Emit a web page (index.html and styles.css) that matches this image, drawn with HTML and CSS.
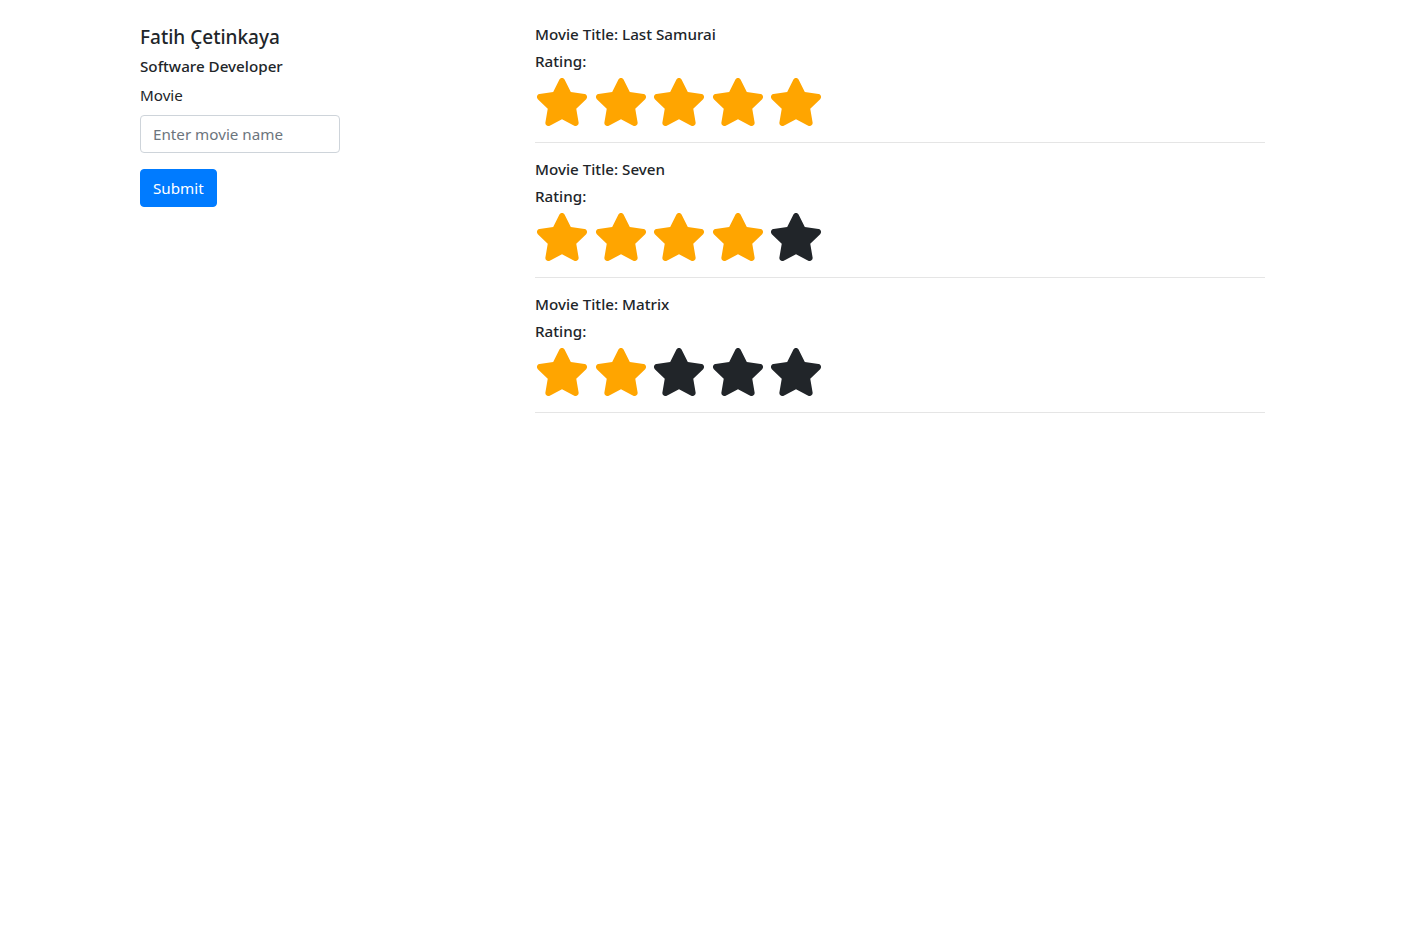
FILE: index.html
```html
<!DOCTYPE html>
<html lang="en">
<head>
<meta charset="utf-8">
<title>Movies</title>
<link rel="stylesheet" href="styles.css">
</head>
<body>
<svg width="0" height="0" class="defs" aria-hidden="true">
  <symbol id="star" viewBox="0 0 576 512">
    <path d="M259.3 17.8L194 150.2 47.9 171.5c-26.2 3.8-36.7 36.1-17.7 54.6l105.7 103-25 145.5c-4.5 26.3 23.2 46 46.4 33.7L288 439.6l130.7 68.7c23.2 12.2 50.9-7.4 46.4-33.7l-25-145.5 105.7-103c19-18.5 8.5-50.8-17.7-54.6L382 150.2 316.7 17.8c-11.7-23.6-45.6-23.9-57.4 0z"/>
  </symbol>
</svg>
<div class="container">
  <div class="col-left">
    <h5 class="name">Fatih Çetinkaya</h5>
    <h6 class="role">Software Developer</h6>
    <form class="form">
      <div class="form-group">
        <label class="label" for="movie">Movie</label>
        <input class="input" id="movie" type="text" placeholder="Enter movie name">
      </div>
      <button class="btn" type="button">Submit</button>
    </form>
  </div>
  <div class="col-right">
    <div class="movie">
      <h6 class="title">Movie Title: Last Samurai</h6>
      <h6 class="title">Rating:</h6>
      <div class="stars">
        <svg class="star on"><use href="#star"/></svg>
        <svg class="star on"><use href="#star"/></svg>
        <svg class="star on"><use href="#star"/></svg>
        <svg class="star on"><use href="#star"/></svg>
        <svg class="star on"><use href="#star"/></svg>
      </div>
    </div>
    <hr class="sep">
    <div class="movie">
      <h6 class="title">Movie Title: Seven</h6>
      <h6 class="title">Rating:</h6>
      <div class="stars">
        <svg class="star on"><use href="#star"/></svg>
        <svg class="star on"><use href="#star"/></svg>
        <svg class="star on"><use href="#star"/></svg>
        <svg class="star on"><use href="#star"/></svg>
        <svg class="star off"><use href="#star"/></svg>
      </div>
    </div>
    <hr class="sep">
    <div class="movie">
      <h6 class="title">Movie Title: Matrix</h6>
      <h6 class="title">Rating:</h6>
      <div class="stars">
        <svg class="star on"><use href="#star"/></svg>
        <svg class="star on"><use href="#star"/></svg>
        <svg class="star off"><use href="#star"/></svg>
        <svg class="star off"><use href="#star"/></svg>
        <svg class="star off"><use href="#star"/></svg>
      </div>
    </div>
    <hr class="sep">
  </div>
</div>
</body>
</html>
```
FILE: styles.css
```css
* { box-sizing: border-box; }
html, body { margin: 0; padding: 0; background: #fff; }
body {
  font-family: "Noto Sans", "Open Sans", "Liberation Sans", sans-serif;
  font-size: 15.2px;
  line-height: 24px;
  color: #212529;
}
.defs { position: absolute; width: 0; height: 0; overflow: hidden; }
.container {
  width: 1140px;
  margin: 0 auto;
  padding-top: 24px;
  display: flex;
}
.col-left { width: 380px; }
.col-right { width: 760px; padding: 0 15px; }
h5, h6 { margin: 0 0 8px; font-weight: 500; }
.name {
  font-size: 19px;
  line-height: 24px;
  padding-top: 1px;
  margin-bottom: 7px;
}
.role, .title {
  font-size: 15.2px;
  line-height: 19px;
  padding-top: 1px;
  margin-bottom: 7px;
}
.form { margin: 0; }
.form-group { margin-bottom: 16px; }
.label { display: block; margin-bottom: 8px; padding-top: 1px; line-height: 23px; }
.input {
  display: block;
  width: 200px;
  height: 38px;
  padding: 6px 12px;
  font: inherit;
  font-size: 15.2px;
  color: #495057;
  border: 1px solid #ced4da;
  border-radius: 4px;
  background: #fff;
}
.input::placeholder { color: #6c757d; }
.btn {
  display: block;
  height: 38px;
  padding: 6px 12px;
  font: inherit;
  font-size: 15.2px;
  color: #fff;
  background: #007bff;
  border: 1px solid #007bff;
  border-radius: 4px;
}
.stars { display: flex; gap: 4.5px; height: 48px; }
.star { width: 54px; height: 48px; display: block; }
.star.on { fill: #ffa500; }
.star.off { fill: #212529; }
.sep {
  margin: 16px 0;
  border: 0;
  border-top: 1px solid rgba(0, 0, 0, 0.1);
}
```
